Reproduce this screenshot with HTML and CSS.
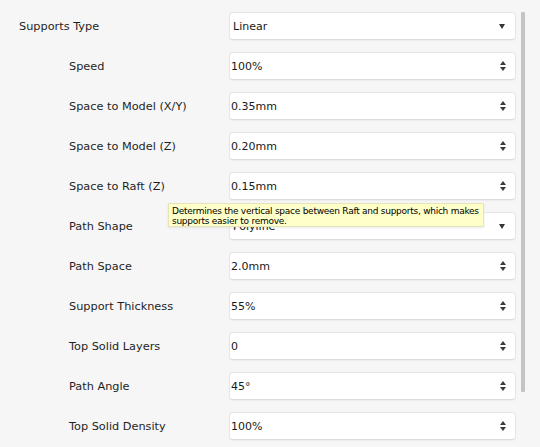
FILE: index.html
```html
<!DOCTYPE html>
<html>
<head>
<meta charset="utf-8">
<link rel="stylesheet" href="styles.css">
</head>
<body>
<div class="panel">
  <div class="form">
    <div class="row">
      <div class="label main">Supports Type</div>
      <div class="field select"><span class="value">Linear</span><span class="arrow"></span></div>
    </div>
    <div class="row">
      <div class="label">Speed</div>
      <div class="field"><span class="value">100%</span><span class="spin"></span></div>
    </div>
    <div class="row">
      <div class="label">Space to Model (X/Y)</div>
      <div class="field"><span class="value">0.35mm</span><span class="spin"></span></div>
    </div>
    <div class="row">
      <div class="label">Space to Model (Z)</div>
      <div class="field"><span class="value">0.20mm</span><span class="spin"></span></div>
    </div>
    <div class="row">
      <div class="label">Space to Raft (Z)</div>
      <div class="field"><span class="value">0.15mm</span><span class="spin"></span></div>
    </div>
    <div class="row">
      <div class="label">Path Shape</div>
      <div class="field select"><span class="value">Polyline</span><span class="arrow"></span></div>
    </div>
    <div class="row">
      <div class="label">Path Space</div>
      <div class="field"><span class="value">2.0mm</span><span class="spin"></span></div>
    </div>
    <div class="row">
      <div class="label">Support Thickness</div>
      <div class="field"><span class="value">55%</span><span class="spin"></span></div>
    </div>
    <div class="row">
      <div class="label">Top Solid Layers</div>
      <div class="field"><span class="value">0</span><span class="spin"></span></div>
    </div>
    <div class="row">
      <div class="label">Path Angle</div>
      <div class="field"><span class="value">45°</span><span class="spin"></span></div>
    </div>
    <div class="row">
      <div class="label">Top Solid Density</div>
      <div class="field"><span class="value">100%</span><span class="spin"></span></div>
    </div>
  </div>
  <div class="scrollbar"></div>
  <div class="tooltip">Determines the vertical space between Raft and supports, which makes supports easier to remove.</div>
</div>
</body>
</html>
```

FILE: styles.css
```css
html, body {
  margin: 0;
  padding: 0;
  background: #f6f6f6;
  width: 540px;
  height: 447px;
  overflow: hidden;
  font-family: "DejaVu Sans", sans-serif;
  color: #222;
}

.panel {
  position: relative;
  display: flex;
  align-items: flex-start;
}

.form {
  display: flex;
  flex-direction: column;
  gap: 12px;
  padding-top: 12px;
}

.row {
  display: grid;
  grid-template-columns: 229px 287px;
  height: 28px;
  align-items: center;
}

.label {
  font-size: 11.3px;
  padding-left: 69px;
  color: #1f1f1f;
}

.label.main {
  padding-left: 19px;
}

.field {
  box-sizing: border-box;
  height: 28px;
  background: #fff;
  border: 1px solid #e6e6e6;
  border-bottom-color: #dcdcdc;
  border-radius: 4px;
  box-shadow: 0 1px 1px rgba(0,0,0,0.04);
  display: flex;
  align-items: center;
  justify-content: space-between;
  padding: 0 9px 0 1px;
  font-size: 11px;
  color: #1a1a1a;
}

.field.select {
  padding-left: 3px;
}

.arrow {
  width: 0;
  height: 0;
  border-left: 3px solid transparent;
  border-right: 3px solid transparent;
  border-top: 5px solid #333;
  margin-right: 1px;
}

.spin {
  position: relative;
  width: 6px;
  height: 10px;
}

.spin::before,
.spin::after {
  content: "";
  position: absolute;
  left: 0;
  width: 0;
  height: 0;
  border-left: 3px solid transparent;
  border-right: 3px solid transparent;
}

.spin::before {
  top: 0;
  border-bottom: 4px solid #3a3a3a;
}

.spin::after {
  bottom: 0;
  border-top: 4px solid #3a3a3a;
}

.scrollbar {
  width: 4px;
  height: 380px;
  margin-top: 12px;
  margin-left: 5px;
  background: #c4c4c4;
  border-radius: 1px;
}

.tooltip {
  position: absolute;
  left: 168px;
  top: 203px;
  width: 316px;
  height: 24px;
  box-sizing: border-box;
  padding: 2px 0 2px 3px;
  background: #ffffca;
  border: 1px solid #e4e4b8;
  box-shadow: 0 1px 2px rgba(0,0,0,0.08);
  font-size: 9px;
  letter-spacing: -0.26px;
  line-height: 10px;
  color: #000;
}
```
